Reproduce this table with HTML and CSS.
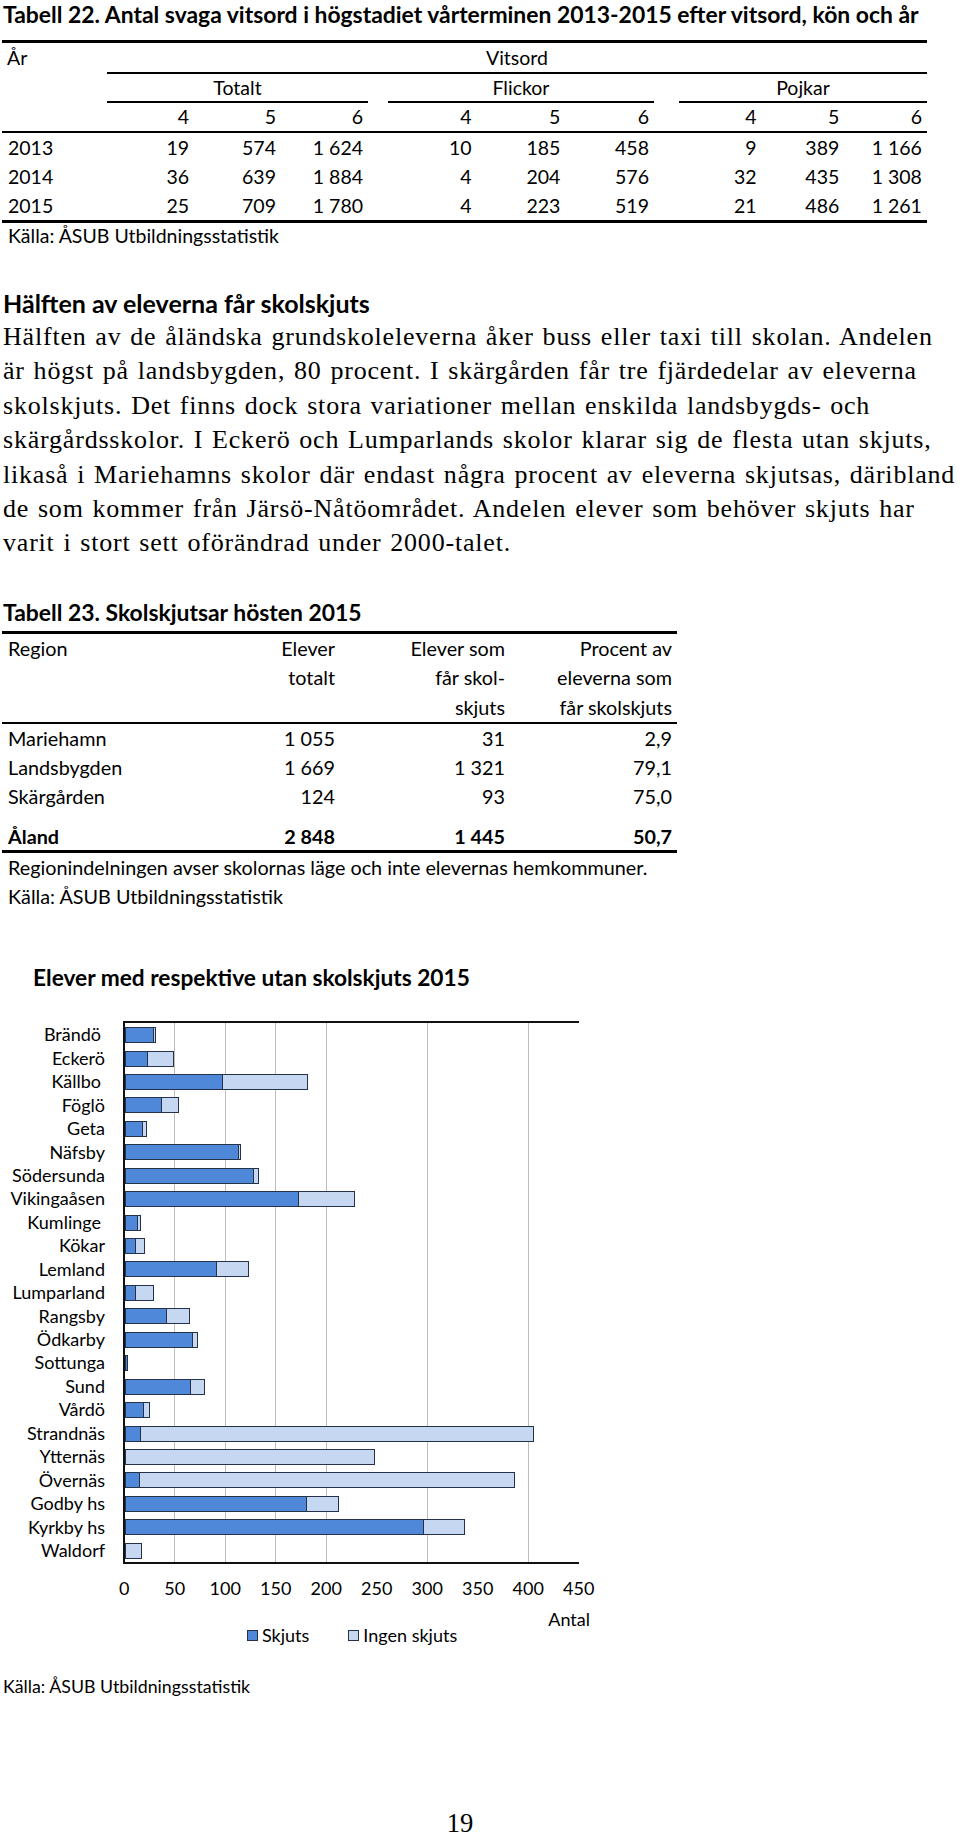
FILE: index.html
```html
<!DOCTYPE html>
<html lang="sv">
<head>
<meta charset="utf-8">
<title>Skolskjuts</title>
<link rel="stylesheet" href="styles.css">
</head>
<body>
<div class="page">
  <h2 class="cap">Tabell 22. Antal svaga vitsord i högstadiet vårterminen 2013-2015 efter vitsord, kön och år</h2>
  <div class="t22">
    <div class="t22-head">
      <div class="yr">År</div>
      <div class="vits">Vitsord</div>
      <div class="grp g1">Totalt</div>
      <div class="grp g2">Flickor</div>
      <div class="grp g3">Pojkar</div>
      <div class="hn c2">4</div><div class="hn c3">5</div><div class="hn c4">6</div>
      <div class="hn c6">4</div><div class="hn c7">5</div><div class="hn c8">6</div>
      <div class="hn c10">4</div><div class="hn c11">5</div><div class="hn c12">6</div>
    </div>
    <div class="t22-row">
      <div class="y">2013</div><div>19</div><div>574</div><div>1 624</div><div></div><div>10</div><div>185</div><div>458</div><div></div><div>9</div><div>389</div><div>1 166</div>
    </div>
    <div class="t22-row">
      <div class="y">2014</div><div>36</div><div>639</div><div>1 884</div><div></div><div>4</div><div>204</div><div>576</div><div></div><div>32</div><div>435</div><div>1 308</div>
    </div>
    <div class="t22-row">
      <div class="y">2015</div><div>25</div><div>709</div><div>1 780</div><div></div><div>4</div><div>223</div><div>519</div><div></div><div>21</div><div>486</div><div>1 261</div>
    </div>
  </div>
  <p class="src s22">Källa: ÅSUB Utbildningsstatistik</p>

  <h3 class="sub">Hälften av eleverna får skolskjuts</h3>
  <p class="body">Hälften av de åländska grundskoleleverna åker buss eller taxi till skolan. Andelen<br>är högst på landsbygden, 80 procent. I skärgården får tre fjärdedelar av eleverna<br>skolskjuts. Det finns dock stora variationer mellan enskilda landsbygds- och<br>skärgårdsskolor. I Eckerö och Lumparlands skolor klarar sig de flesta utan skjuts,<br>likaså i Mariehamns skolor där endast några procent av eleverna skjutsas, däribland<br>de som kommer från Järsö-Nåtöområdet. Andelen elever som behöver skjuts har<br>varit i stort sett oförändrad under 2000-talet.</p>

  <h2 class="cap cap23">Tabell 23. Skolskjutsar hösten 2015</h2>
  <div class="t23">
    <div class="t23-head">
      <div class="reg">Region</div>
      <div>Elever<br>totalt</div>
      <div>Elever som<br>får skol-<br>skjuts</div>
      <div>Procent av<br>eleverna som<br>får skolskjuts</div>
    </div>
    <div class="t23-row"><div class="reg">Mariehamn</div><div>1 055</div><div>31</div><div>2,9</div></div>
    <div class="t23-row"><div class="reg">Landsbygden</div><div>1 669</div><div>1 321</div><div>79,1</div></div>
    <div class="t23-row"><div class="reg">Skärgården</div><div>124</div><div>93</div><div>75,0</div></div>
    <div class="t23-row tot"><div class="reg">Åland</div><div>2 848</div><div>1 445</div><div>50,7</div></div>
  </div>
  <p class="src note">Regionindelningen avser skolornas läge och inte elevernas hemkommuner.</p>
  <p class="src note">Källa: ÅSUB Utbildningsstatistik</p>

  <div class="chart">
    <h3 class="ctitle">Elever med respektive utan skolskjuts 2015</h3>
    <div class="cbody">
      <div class="labels">
        <div class="sp">Brändö</div><div>Eckerö</div><div class="sp">Källbo</div><div>Föglö</div><div>Geta</div><div>Näfsby</div><div>Södersunda</div><div>Vikingaåsen</div><div class="sp">Kumlinge</div><div>Kökar</div><div>Lemland</div><div>Lumparland</div><div>Rangsby</div><div>Ödkarby</div><div>Sottunga</div><div>Sund</div><div>Vårdö</div><div>Strandnäs</div><div>Ytternäs</div><div>Övernäs</div><div>Godby hs</div><div>Kyrkby hs</div><div>Waldorf</div>
      </div>
      <div class="plot">
        <div class="bar"><span class="seg s" style="width:29.3px"></span><span class="seg n" style="width:2.2px"></span></div>
        <div class="bar"><span class="seg s" style="width:23.2px"></span><span class="seg n" style="width:26.3px"></span></div>
        <div class="bar"><span class="seg s" style="width:98px"></span><span class="seg n" style="width:84.8px"></span></div>
        <div class="bar"><span class="seg s" style="width:37.4px"></span><span class="seg n" style="width:16.2px"></span></div>
        <div class="bar"><span class="seg s" style="width:18.2px"></span><span class="seg n" style="width:4.2px"></span></div>
        <div class="bar"><span class="seg s" style="width:114.1px"></span><span class="seg n" style="width:1.5px"></span></div>
        <div class="bar"><span class="seg s" style="width:129.3px"></span><span class="seg n" style="width:5px"></span></div>
        <div class="bar"><span class="seg s" style="width:173.7px"></span><span class="seg n" style="width:56.6px"></span></div>
        <div class="bar"><span class="seg s" style="width:13.1px"></span><span class="seg n" style="width:3px"></span></div>
        <div class="bar"><span class="seg s" style="width:11.1px"></span><span class="seg n" style="width:9.1px"></span></div>
        <div class="bar"><span class="seg s" style="width:91.9px"></span><span class="seg n" style="width:32.3px"></span></div>
        <div class="bar"><span class="seg s" style="width:11.1px"></span><span class="seg n" style="width:18.2px"></span></div>
        <div class="bar"><span class="seg s" style="width:42.4px"></span><span class="seg n" style="width:22.2px"></span></div>
        <div class="bar"><span class="seg s" style="width:67.7px"></span><span class="seg n" style="width:5px"></span></div>
        <div class="bar"><span class="seg s" style="width:3px"></span></div>
        <div class="bar"><span class="seg s" style="width:65.7px"></span><span class="seg n" style="width:14.1px"></span></div>
        <div class="bar"><span class="seg s" style="width:19.2px"></span><span class="seg n" style="width:6.1px"></span></div>
        <div class="bar"><span class="seg s" style="width:16.2px"></span><span class="seg n" style="width:392.9px"></span></div>
        <div class="bar"><span class="seg n" style="width:249.5px"></span></div>
        <div class="bar"><span class="seg s" style="width:15.2px"></span><span class="seg n" style="width:374.7px"></span></div>
        <div class="bar"><span class="seg s" style="width:181.8px"></span><span class="seg n" style="width:32.3px"></span></div>
        <div class="bar"><span class="seg s" style="width:299px"></span><span class="seg n" style="width:41.4px"></span></div>
        <div class="bar"><span class="seg n" style="width:17.2px"></span></div>
      </div>
    </div>
    <div class="xaxis">
      <span>0</span><span>50</span><span>100</span><span>150</span><span>200</span><span>250</span><span>300</span><span>350</span><span>400</span><span>450</span>
    </div>
    <div class="foot">
      <div class="legend">
        <span class="key"><i class="sw s"></i>Skjuts</span>
        <span class="key"><i class="sw n"></i>Ingen skjuts</span>
      </div>
      <div class="atitle">Antal</div>
    </div>
    <p class="src csrc">Källa: ÅSUB Utbildningsstatistik</p>
  </div>

  <div class="pno">19</div>
</div>
</body>
</html>
```

FILE: styles.css
```css
* { box-sizing: border-box; }
html, body { margin: 0; padding: 0; background: #fff; }
body { color: #000; font-family: Lato, "Open Sans", sans-serif; }
.page { width: 960px; height: 1840px; padding-left: 2px; overflow: hidden; }

.cap { margin: 0; font-size: 22.9px; line-height: 28px; font-weight: 700; padding-left: 1px; }

/* Tabell 22 */
.t22 { width: 925px; margin-top: 12px; border-top: 3px solid #000; border-bottom: 3px solid #000; font-size: 19.5px; }
.t22-head, .t22-row {
  display: grid;
  grid-template-columns: 105px 87px 87px 87px 20px 88.67px 88.67px 88.67px 25px 82.67px 82.67px 82.67px;
}
.t22-head { grid-template-rows: 31px 29px 28px; border-bottom: 2px solid #000; }
.yr { grid-row: 1; grid-column: 1; line-height: 29px; padding-left: 5px; }
.vits { grid-row: 1; grid-column: 2 / 13; text-align: center; line-height: 29px; border-bottom: 2px solid #000; }
.grp { grid-row: 2; text-align: center; line-height: 27px; border-bottom: 2px solid #000; }
.g1 { grid-column: 2 / 5; }
.g2 { grid-column: 6 / 9; }
.g3 { grid-column: 10 / 13; }
.hn { grid-row: 3; text-align: right; padding-right: 5px; line-height: 28px; }
.c2 { grid-column: 2; } .c3 { grid-column: 3; } .c4 { grid-column: 4; }
.c6 { grid-column: 6; } .c7 { grid-column: 7; } .c8 { grid-column: 8; }
.c10 { grid-column: 10; } .c11 { grid-column: 11; } .c12 { grid-column: 12; }
.t22-row { line-height: 29px; }
.t22-row > div { text-align: right; padding-right: 5px; }
.t22-row > .y { text-align: left; padding-left: 6px; }

.src { margin: 0; font-size: 19.5px; line-height: 26px; padding-left: 6px; }

/* Text section */
.sub { margin: 40px 0 0; font-size: 25px; line-height: 28px; font-weight: 700; padding-left: 1px; }
.body { margin: 3px 0 0; font-family: "Liberation Serif", "Times New Roman", serif; font-size: 26px; letter-spacing: 0.8px; word-spacing: 1.5px; line-height: 34.4px; padding-left: 1px; }

/* Tabell 23 */
.cap23 { margin-top: 37px; }
.t23 { width: 675px; margin-top: 5px; border-top: 3px solid #000; border-bottom: 3px solid #000; font-size: 19.8px; }
.t23-head, .t23-row { display: grid; grid-template-columns: 200px 138px 170px 167px; }
.t23-head { line-height: 29.5px; border-bottom: 2px solid #000; }
.t23-head > div, .t23-row > div { text-align: right; padding-right: 5px; }
.t23-head > .reg, .t23-row > .reg { text-align: left; padding-left: 6px; }
.t23-row { line-height: 29px; }
.t23-row.tot { margin-top: 12px; line-height: 27px; font-weight: 700; }
.note { font-size: 19.8px; line-height: 29px; }

/* Chart */
.chart { font-size: 18px; }
.ctitle { margin: 53px 0 0; padding-left: 31px; font-size: 22.7px; line-height: 28px; font-weight: 700; }
.cbody { display: flex; margin-top: 29px; }
.labels { width: 121px; padding: 2px 18px 0 0; text-align: right; }
.labels > div { height: 23.45px; line-height: 23.45px; white-space: nowrap; }
.labels > .sp { padding-right: 4px; }
.plot {
  width: 456px;
  border-top: 2px solid #111;
  border-bottom: 2px solid #111;
  border-left: 2px solid #111;
  background-image: repeating-linear-gradient(to right, transparent 0, transparent 49.5px, #bdbdbd 49.5px, #bdbdbd 50.5px);
}
.bar { height: 23.45px; display: flex; align-items: center; }
.seg { display: block; height: 16px; border: 1px solid #25324a; }
.seg + .seg { border-left: 0; }
.seg.s { background: #4f88d8; }
.seg.n { background: #c6d8f1; }

.xaxis { display: flex; margin: 13px 0 0 97px; line-height: 22px; }
.xaxis > span { width: 50.5px; text-align: center; }

.foot { display: flex; align-items: flex-start; margin-top: 9px; }
.legend { display: flex; gap: 39px; margin-left: 245px; padding-top: 16px; line-height: 22px; }
.key { display: flex; align-items: center; gap: 4px; }
.sw { display: block; width: 11px; height: 11px; border: 1px solid #25324a; }
.sw.s { background: #4f88d8; }
.sw.n { background: #c6d8f1; }
.atitle { margin-left: 91px; line-height: 22px; }

.csrc { font-size: 17.8px; line-height: 26px; padding-left: 1px; margin-top: 27px; }

.pno { width: 916px; margin-top: 112px; text-align: center; font-family: "Liberation Serif", "Times New Roman", serif; font-size: 26.6px; line-height: 24px; }
```
